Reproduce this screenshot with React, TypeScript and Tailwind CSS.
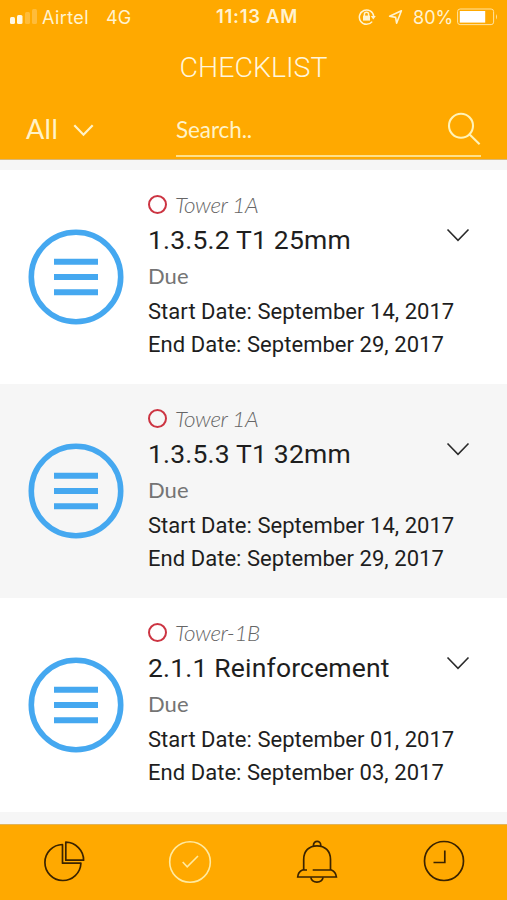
interface ChecklistEntry {
  id: number;
  tower: string;
  title: string;
  status: string;
  startDate: string;
  endDate: string;
}

const entries: ChecklistEntry[] = [
  { id: 1, tower: 'Tower 1A', title: '1.3.5.2 T1 25mm', status: 'Due', startDate: 'September 14, 2017', endDate: 'September 29, 2017' },
  { id: 2, tower: 'Tower 1A', title: '1.3.5.3 T1 32mm', status: 'Due', startDate: 'September 14, 2017', endDate: 'September 29, 2017' },
  { id: 3, tower: 'Tower-1B', title: '2.1.1 Reinforcement', status: 'Due', startDate: 'September 01, 2017', endDate: 'September 03, 2017' },
];

function StatusBar() {
  return (
    <div className="grid h-[34px] grid-cols-[216px_1fr_149px] items-center whitespace-nowrap font-['Inter',sans-serif] text-[18px] text-[#fff3d0]">
      <div className="flex items-center pl-[10px]">
        <svg width="27" height="18" viewBox="0 0 27 18" fill="#fff8e6">
          <rect x="0" y="9" width="5" height="7" rx="1.5" />
          <rect x="7" y="7" width="5.5" height="9" rx="1.5" />
          <rect x="15" y="4" width="5" height="12" rx="1.5" opacity=".25" />
          <rect x="22" y="1" width="5" height="15" rx="1.5" opacity=".25" />
        </svg>
        <span className="ml-[5px] w-[64px] tracking-[0.4px]">Airtel</span>
        <span>4G</span>
      </div>
      <span className="text-[18.5px] font-semibold tracking-[0.7px]">11:13 AM</span>
      <div className="flex items-center">
        <svg width="18" height="18" viewBox="0 0 18 18" fill="none" stroke="#fff3d0" strokeWidth="1.5">
          <path d="M14.2 13.6A7.2 7.2 0 1 1 15.7 8.2" />
          <path d="M12.8 8h5l-2.5 3.4z" fill="#fff3d0" stroke="none" />
          <rect x="5" y="7.6" width="7" height="5" fill="#fff3d0" stroke="none" />
          <path d="M6.4 8V6.3a2.1 2.1 0 0 1 4.2 0V8" />
        </svg>
        <svg className="ml-[12px]" width="15" height="16" viewBox="0 0 15 16" fill="none" stroke="#fff3d0" strokeWidth="1.6" strokeLinejoin="round">
          <path d="M13.4 1.8L1.6 7.2l6 1.2 1 5.8z" />
        </svg>
        <span className="ml-[10px] w-[44px]">80%</span>
        <svg width="42" height="18" viewBox="0 0 42 18">
          <rect x="0.6" y="1" width="36" height="15.6" rx="2.5" fill="none" stroke="#ffe3a0" strokeWidth="1" />
          <rect x="2.8" y="3" width="25.4" height="11.6" fill="#fff" />
          <path d="M39 6v5.6q2-2.8 0-5.6z" fill="#ffe3a0" />
        </svg>
      </div>
    </div>
  );
}

function Header() {
  return (
    <header className="flex h-[160px] shrink-0 flex-col border-b border-[#d9b778] bg-[#ffa900]">
      <StatusBar />
      <h1 className="h-[66px] text-center font-['Roboto',sans-serif] text-[28.5px] font-light leading-[67px] text-[#fff6dc]">CHECKLIST</h1>
      <div className="flex h-[57px] items-start pl-[26px] pr-[26px] font-['Lato',sans-serif] text-[#fff3c8]">
        <button className="flex h-[57px] w-[150px] items-center pt-[2px] text-[27px] tracking-[0.4px]">
          <span>All</span>
          <svg className="ml-[15px] mt-[1px]" width="21" height="13" viewBox="0 0 21 13" fill="none" stroke="#fff3c8" strokeWidth="2.2">
            <path d="M1.3 1.3l9.2 9.4 9.2-9.4" />
          </svg>
        </button>
        <div className="flex h-[57px] flex-1 items-center justify-between border-b-2 border-[#ffe08a]">
          <span className="pt-[4px] text-[22.5px] tracking-[-0.1px]">Search..</span>
          <svg className="mt-[2px]" width="34" height="34" viewBox="0 0 34 34" fill="none" stroke="#fff3b8" strokeWidth="2.1">
            <circle cx="14" cy="13.8" r="12" />
            <path d="M22.4 22.2l10.2 10" />
          </svg>
        </div>
      </div>
    </header>
  );
}

function ChecklistRow({ entry }: { entry: ChecklistEntry }) {
  return (
    <li className="flex h-[214px] pl-[28px] odd:bg-white even:bg-[#f6f6f6]">
      <svg className="mt-[59px] shrink-0" width="96" height="96" viewBox="0 0 96 96" fill="none" stroke="#45a8f0">
        <circle cx="48" cy="48" r="44.7" strokeWidth="5.6" />
        <path d="M26 32.7h44M26 48h44M26 63.3h44" strokeWidth="6" />
      </svg>
      <div className="ml-[24px] w-[298px] whitespace-nowrap pt-5 font-['Roboto',sans-serif] text-[22px] tracking-[0.04px] text-[#1e1e1e]">
        <div className="flex h-[30px] items-center font-['Lato',sans-serif] text-[22.5px] font-light italic leading-[30px] tracking-[-0.4px] text-[#666]">
          <span className="mr-[8px] mb-[2px] size-[19px] rounded-full border-2 border-[#cc3442]" />
          <span>{entry.tower}</span>
        </div>
        <h2 className="text-[26.5px] leading-[39px] tracking-[0.18px]">{entry.title}</h2>
        <p className="font-['Lato',sans-serif] leading-[34px] text-[#747474]">{entry.status}</p>
        <p className="mt-0.5 leading-[33px]">Start Date: {entry.startDate}</p>
        <p className="leading-[33px]">End Date: {entry.endDate}</p>
      </div>
      <svg className="mt-[58px] shrink-0" width="24" height="15" viewBox="0 0 24 15" fill="none" stroke="#2a2a2a" strokeWidth="1.6">
        <path d="M1.5 1.5L12 12.3 22.5 1.5" />
      </svg>
    </li>
  );
}

function TabBar() {
  return (
    <nav className="grid h-[76px] shrink-0 grid-cols-4 border-t border-[#e0b45c] bg-[#ffa900]">
      <button className="flex justify-center pl-[3px] pt-[15px]">
        <svg width="42" height="44" viewBox="0 0 42 44" fill="none" stroke="#3a2300" strokeWidth="1.7" strokeLinejoin="round">
          <path d="M18.5 4.5a18 18 0 1 0 18.4 18.7H18.5z" />
          <path d="M21.8 2.2v18h17.8A18 18 0 0 0 21.8 2.2z" />
        </svg>
      </button>
      <button className="flex justify-center pt-[15px]">
        <svg width="44" height="44" viewBox="0 0 44 44" fill="none" stroke="#ffeaa0" strokeWidth="1.6">
          <circle cx="22" cy="22" r="20.3" />
          <path d="M14.7 22l4.5 4.8L30 16" />
        </svg>
      </button>
      <button className="flex justify-center pl-[1px] pt-[15px]">
        <svg width="42" height="44" viewBox="0 0 42 44" fill="none" stroke="#3a2300" strokeWidth="1.7">
          <path d="M17.5 6.2V5a3.6 3.6 0 0 1 7.2 0v1.2" />
          <path d="M7.7 30V19.5C7.7 11 13 5.8 21 5.8S34.5 11 34.5 19.5V30" />
          <path d="M11 30H6.5Q2 32 1.7 37h38.7q-.5-5-5-7H16.7" />
          <path d="M14.8 37.4c1.3 6.3 11 6.3 12.3 0" />
        </svg>
      </button>
      <button className="flex justify-center pt-[15px]">
        <svg width="42" height="42" viewBox="0 0 42 42" fill="none" stroke="#3a2300" strokeWidth="1.7">
          <circle cx="21" cy="21" r="19.5" />
          <path d="M21.8 10.5v12H10.5" />
        </svg>
      </button>
    </nav>
  );
}

export default function App() {
  return (
    <div className="flex h-[900px] w-[507px] flex-col overflow-hidden bg-[#f6f6f6]">
      <Header />
      <ul className="flex-1 pt-[10px]">
        {entries.map((entry) => (
          <ChecklistRow key={entry.id} entry={entry} />
        ))}
      </ul>
      <TabBar />
    </div>
  );
}
